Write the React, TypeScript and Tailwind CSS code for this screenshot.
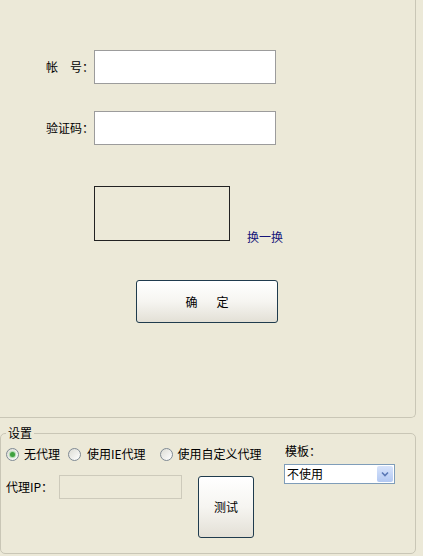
const font = { fontFamily: '"Noto Sans CJK SC", "DejaVu Sans", sans-serif' }

function Radio({ checked }: { checked?: boolean }) {
  return (
    <span className="flex h-[13px] w-[13px] shrink-0 items-center justify-center rounded-full border border-[#7f8a94] bg-gradient-to-br from-[#dcdcd5] to-white">
      {checked && (
        <span className="h-[5px] w-[5px] rounded-full bg-[#3fa13f] shadow-[0_0_1px_1px_#a6d8a6]" />
      )}
    </span>
  )
}

function XpButton({ className, children }: { className: string; children: React.ReactNode }) {
  return (
    <button
      className={`flex items-center justify-center rounded-[3px] border border-[#1f3b4d] bg-gradient-to-b from-white via-[#f6f5f1] to-[#e3e0d6] text-[12px] leading-[14px] text-black ${className}`}
    >
      {children}
    </button>
  )
}

export default function App() {
  return (
    <div className="h-[556px] w-[423px] overflow-hidden bg-[#ECE9D8] text-[12px] leading-[14px] text-black" style={font}>
      {/* login panel */}
      <div className="h-[418px] w-[416px] rounded-br-[5px] border-r border-b border-[#c9c6b6] pt-[50px] pl-[46px]">
        <div className="flex items-center">
          <span className="w-[48px]">帐　号：</span>
          <div className="h-[34px] w-[182px] border border-[#9c9c9c] bg-white" />
        </div>
        <div className="mt-[27px] flex items-center">
          <span className="w-[48px]">验证码：</span>
          <div className="h-[34px] w-[182px] border border-[#9c9c9c] bg-white" />
        </div>
        <div className="mt-[41px] ml-[48px] flex items-end">
          <div className="h-[55px] w-[136px] border border-[#222]" />
          <span className="mb-[-3px] ml-[17px] text-[#15157a]">换一换</span>
        </div>
        <XpButton className="mt-[39px] ml-[90px] h-[43px] w-[142px] gap-[19px]">
          <span>确</span>
          <span>定</span>
        </XpButton>
      </div>

      {/* settings group */}
      <fieldset className="mt-[8px] h-[128px] w-[416px] rounded-[5px] border border-[#c9c6b6] pl-[5px]">
        <legend className="px-[2px] leading-[14px]">设置</legend>
        <div className="flex">
          <div className="w-[278px]">
            <div className="mt-[7px] flex h-[14px] items-center">
              <Radio checked />
              <span className="ml-[5px]">无代理</span>
              <span className="ml-[8px]"><Radio /></span>
              <span className="ml-[6px]">使用IE代理</span>
              <span className="ml-[14px]"><Radio /></span>
              <span className="ml-[5px]">使用自定义代理</span>
            </div>
            <div className="mt-[14px] flex items-start">
              <span className="flex h-[24px] w-[53px] items-center">代理IP：</span>
              <div className="h-[24px] w-[123px] border border-[#cdcabb] bg-[#ECE9D8]" />
              <XpButton className="mt-[1px] ml-[16px] h-[62px] w-[56px]">测试</XpButton>
            </div>
          </div>
          <div>
            <div className="mt-[4px] ml-[1px]">模板：</div>
            <div className="mt-[6px] flex h-[20px] w-[111px] items-center border border-[#7f9db9] bg-white">
              <span className="flex-1 pl-[2px]">不使用</span>
              <span className="mr-[1px] flex h-[16px] w-[16px] items-center justify-center rounded-[2px] bg-gradient-to-b from-[#d8e4fb] to-[#b2c8f2]">
                <svg width="8" height="6" viewBox="0 0 8 6">
                  <path d="M1 1.5 L4 4.5 L7 1.5" fill="none" stroke="#5a78b5" strokeWidth="1.6" />
                </svg>
              </span>
            </div>
          </div>
        </div>
      </fieldset>
    </div>
  )
}
